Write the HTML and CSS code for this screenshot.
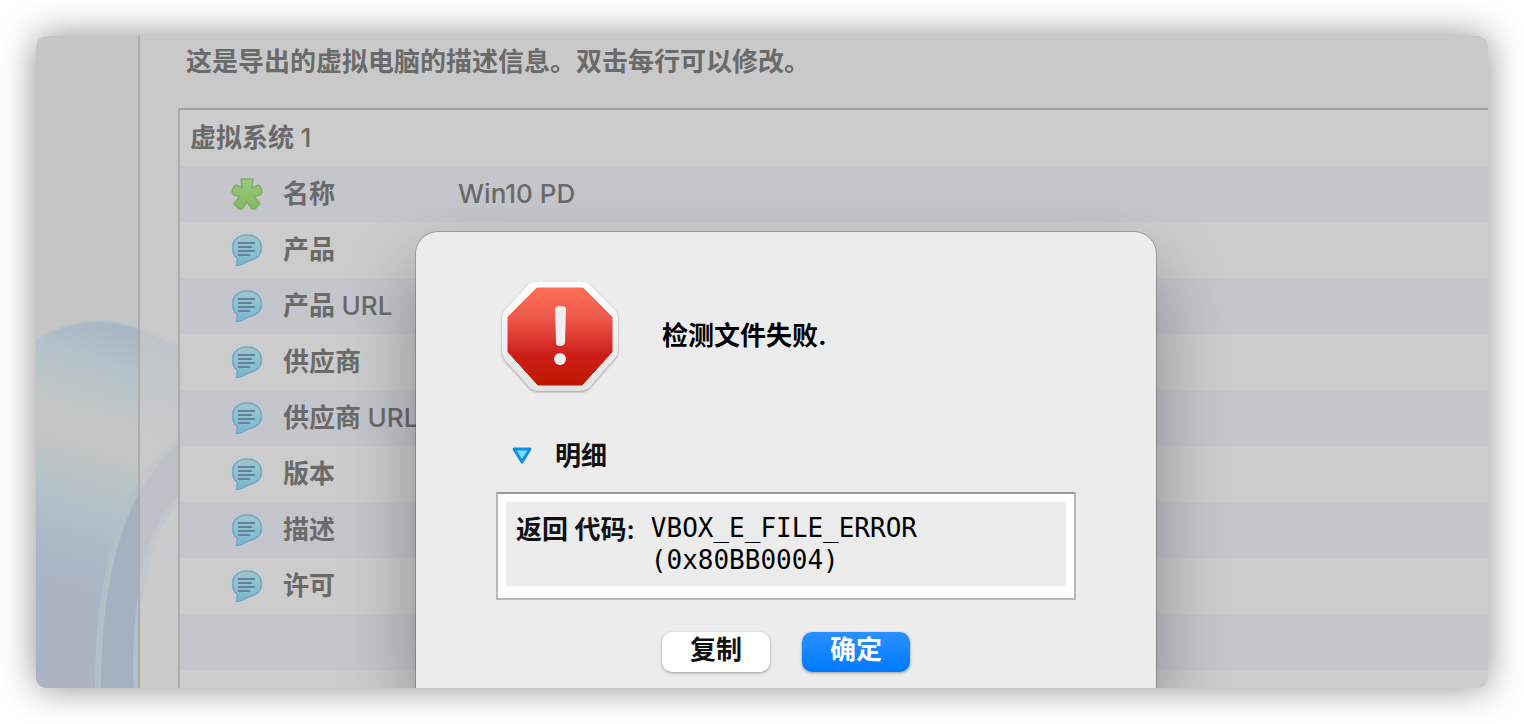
FILE: index.html
```html
<!DOCTYPE html>
<html lang="zh-CN">
<head>
<meta charset="utf-8">
<title>导出虚拟电脑</title>
<link rel="stylesheet" href="styles.css">
</head>
<body>
<svg class="defs" width="0" height="0" aria-hidden="true">
  <defs>
    <linearGradient id="bubbleFill" x1="0" y1="0" x2="0" y2="1">
      <stop offset="0" stop-color="#a0c6ce"/><stop offset="1" stop-color="#79b9d0"/>
    </linearGradient>
    <linearGradient id="leafFill" x1="0" y1="0" x2="0" y2="1">
      <stop offset="0" stop-color="#9bc785"/><stop offset="1" stop-color="#82ba5c"/>
    </linearGradient>
    <symbol id="bubble" viewBox="0 0 32 32">
      <path d="M16 1C7 1 1.500 6.500 1.500 14C1.500 19 3.500 22 6.500 24.500L5.500 31.500C10 31.500 14 29.500 17 27C25 25.500 30.500 21 30.500 14C30.500 6.500 25 1 16 1Z" fill="url(#bubbleFill)" stroke="#70a6cb" stroke-width="1.500"/>
      <path d="M7 9h17M7 13h14M7 17h17M7 21h12" stroke="#66809b" stroke-width="2"/>
    </symbol>
    <symbol id="leaf" viewBox="0 0 32 32">
      <path d="M10 1H22L21 10L27 7Q30 8 31 14Q30 18 23 18L29 26L24 31H21L16 24L11 31H8L3 26L9 18Q2 18 1 14Q2 8 5 7L11 10Z" fill="url(#leafFill)" stroke="#7cae61" stroke-width="1.500" stroke-linejoin="round"/>
    </symbol>
  </defs>
</svg>
<div class="window">
  <svg class="art" viewBox="0 0 144 380" aria-hidden="true">
    <defs>
      <linearGradient id="petal" gradientUnits="userSpaceOnUse" x1="90" y1="10" x2="5" y2="290">
        <stop offset="0" stop-color="#a6b4c4"/><stop offset=".17" stop-color="#b3c1ca"/>
        <stop offset=".28" stop-color="#bdc6c6"/><stop offset=".42" stop-color="#c6c6c5"/>
        <stop offset=".54" stop-color="#bac4c4"/><stop offset=".68" stop-color="#b0bfca"/>
        <stop offset=".84" stop-color="#aab7c6"/><stop offset="1" stop-color="#acb3c3"/>
      </linearGradient>
    </defs>
    <path d="M0 33C30 11 72 8 104 21C120 27 132 34 144 38V380H0Z" fill="url(#petal)"/>
    <path d="M0 33C30 11 72 8 104 21C120 27 132 34 144 38" fill="none" stroke="#b2c2cf" stroke-width="2"/>
    <path d="M144 130C92 172 62 250 62 380H102C98 290 112 220 144 190Z" fill="#a5b0c0"/>
    <path d="M144 130C92 172 62 250 62 380" fill="none" stroke="#b2c0c8" stroke-width="6"/>
    <path d="M144 190C112 220 97 290 100 380H144Z" fill="#cbcbca"/>
    <path d="M144 190C112 220 97 290 100 380" fill="none" stroke="#b2bfcc" stroke-width="5"/>
    <path d="M122 245L144 225V300Z" fill="#c3c9ca"/>
  </svg>
  <aside class="sidebar"></aside>
  <main class="content">
    <p class="intro">这是导出的虚拟电脑的描述信息。双击每行可以修改。</p>
    <table class="settings">
      <thead><tr><th colspan="2" scope="col">虚拟系统 <span class="latin">1</span></th></tr></thead>
      <tbody>
        <tr><th scope="row"><span class="label"><svg class="icon"><use href="#leaf"/></svg><span>名称</span></span></th><td>Win10 PD</td></tr>
        <tr><th scope="row"><span class="label"><svg class="icon"><use href="#bubble"/></svg><span>产品</span></span></th><td></td></tr>
        <tr><th scope="row"><span class="label"><svg class="icon"><use href="#bubble"/></svg><span>产品 <span class="latin">URL</span></span></span></th><td></td></tr>
        <tr><th scope="row"><span class="label"><svg class="icon"><use href="#bubble"/></svg><span>供应商</span></span></th><td></td></tr>
        <tr><th scope="row"><span class="label"><svg class="icon"><use href="#bubble"/></svg><span>供应商 <span class="latin">URL</span></span></span></th><td></td></tr>
        <tr><th scope="row"><span class="label"><svg class="icon"><use href="#bubble"/></svg><span>版本</span></span></th><td></td></tr>
        <tr><th scope="row"><span class="label"><svg class="icon"><use href="#bubble"/></svg><span>描述</span></span></th><td></td></tr>
        <tr><th scope="row"><span class="label"><svg class="icon"><use href="#bubble"/></svg><span>许可</span></span></th><td></td></tr>
        <tr><th></th><td></td></tr>
        <tr><th></th><td></td></tr>
      </tbody>
    </table>
  </main>
  <section class="dialog" role="alertdialog" aria-labelledby="message">
    <div class="alert">
      <svg class="stop" viewBox="0 0 124 120" aria-hidden="true">
        <defs>
          <linearGradient id="stopRed" x1="0" y1="0" x2="0" y2="1">
            <stop offset="0" stop-color="#ff7058"/><stop offset=".3" stop-color="#ee594a"/>
            <stop offset=".7" stop-color="#cd1d18"/><stop offset="1" stop-color="#bc1700"/>
          </linearGradient>
          <linearGradient id="stopRim" x1="0" y1="0" x2="0" y2="1">
            <stop offset="0" stop-color="#fff"/><stop offset="1" stop-color="#e2e2e2"/>
          </linearGradient>
        </defs>
        <path class="rim" d="M38 2H84Q89 2 92 5L117 30Q120 33 120 37V71Q120 75 117 78L92 107Q88 111 83 111H40Q35 111 31 107L7 80Q4 76 4 72V37Q4 33 7 30L30 5Q33 2 38 2Z" fill="url(#stopRim)"/>
        <path d="M39 8H85L114 37V72L84 105H40L10 72V37Z" fill="url(#stopRed)" stroke="url(#stopRed)" stroke-width="1" stroke-linejoin="round"/>
        <path d="M57 29Q58 26 62 26Q68 26 68 29L67 63Q66 66 62 66Q58 66 58 63Z" fill="#f0eeee"/>
        <circle cx="62" cy="79" r="6" fill="#f0eeee"/>
      </svg>
      <p class="message" id="message">检测文件失败.</p>
    </div>
    <details class="details" open>
      <summary><svg class="arrow" viewBox="0 0 22 20" aria-hidden="true"><path d="M3 3H19L11 16Z" fill="#70e3ff" stroke="#138bea" stroke-width="3" stroke-linejoin="round"/></svg>明细</summary>
      <div class="report">
        <dl>
          <dt>返回 代码:</dt>
          <dd>VBOX_E_FILE_ERROR<br>(0x80BB0004)</dd>
        </dl>
      </div>
    </details>
    <div class="actions">
      <button type="button" class="btn">复制</button>
      <button type="button" class="btn primary">确定</button>
    </div>
  </section>
</div>
</body>
</html>
```
FILE: styles.css
```css
* { box-sizing: border-box; }

body {
  margin: 0;
  padding: 36px;
  background: #fff;
  font: 600 26px/32px Inter, "Noto Sans CJK SC", sans-serif;
  color: #6a6a6a;
}

p, dl, dd { margin: 0; }

.defs { position: absolute; }

.window {
  position: relative;
  display: flex;
  height: calc(100vh - 72px);
  min-height: 600px;
  overflow: hidden;
  border-radius: 10px;
  background: #c5c5c5;
}

body::before {
  content: "";
  position: absolute;
  inset: 36px;
  border-radius: 10px;
  box-shadow: 0 0 36px rgba(0, 0, 0, .45);
}

.art {
  position: absolute;
  left: 0;
  bottom: 0;
  width: 144px;
  height: 380px;
}

.sidebar {
  position: relative;
  flex: none;
  width: 102px;
}

.content {
  position: relative;
  flex: 1;
  padding: 10px 0 0 38px;
  border-left: 2px solid #acacac;
  background: rgba(203, 203, 203, .65);
}

.intro { padding-left: 8px; }

.settings {
  width: 100%;
  margin-top: 30px;
  border-spacing: 0;
  border-top: 2px solid #a0a0a0;
  border-left: 2px solid #acacac;
  background: #ccc;
}

.settings th, .settings td {
  height: 56px;
  padding: 0;
  text-align: left;
}

.settings th { font-weight: 600; }

.settings td, .latin { font-weight: 500; }

.settings thead th { padding-left: 10px; }

.settings tbody th { width: 278px; padding-left: 51px; }

.settings tbody tr:nth-child(odd) { background: #c5c6cc; }

.label {
  display: flex;
  align-items: center;
  gap: 20px;
  white-space: nowrap;
}

.icon { width: 32px; height: 32px; }

.dialog {
  position: absolute;
  top: 196px;
  bottom: 0;
  left: 380px;
  width: 740px;
  padding: 48px 80px 0;
  border-radius: 22px 22px 0 0;
  background: #ececec;
  color: #111;
  box-shadow: 0 0 0 1px rgba(0, 0, 0, .2), 0 36px 72px rgba(0, 0, 0, .32);
}

.alert {
  display: flex;
  align-items: center;
  gap: 40px;
  padding-left: 2px;
}

.stop { width: 124px; height: 120px; }

.rim { filter: drop-shadow(0 1px 1px rgba(0, 0, 0, .35)); }

.message { font-weight: 700; color: #000; padding-bottom: 8px; }

.details { margin-top: 40px; }

summary {
  display: flex;
  align-items: center;
  gap: 22px;
  padding-left: 15px;
  list-style: none;
}

.arrow { width: 22px; height: 20px; }

.report {
  margin-top: 20px;
  padding: 8px 8px 12px;
  border: 2px solid #b8b8b8;
  border-top-color: #999;
  background: #fff;
}

.report dl {
  display: flex;
  gap: 16px;
  min-height: 84px;
  padding: 10px;
  background: #ececec;
}

.report dt { padding-top: 2px; }

.report dd { font-family: "DejaVu Sans Mono", monospace; font-weight: 500; color: #000; }

.actions {
  display: flex;
  justify-content: center;
  gap: 32px;
  margin-top: 32px;
}

.btn {
  width: 108px;
  height: 40px;
  padding: 0 0 4px;
  border: 0;
  border-radius: 10px;
  background: #fff;
  color: #111;
  font: inherit;
  box-shadow: 0 1px 3px rgba(0, 0, 0, .35);
}

.primary {
  background: linear-gradient(#2b90ff, #007aff);
  color: #fff;
}
```
